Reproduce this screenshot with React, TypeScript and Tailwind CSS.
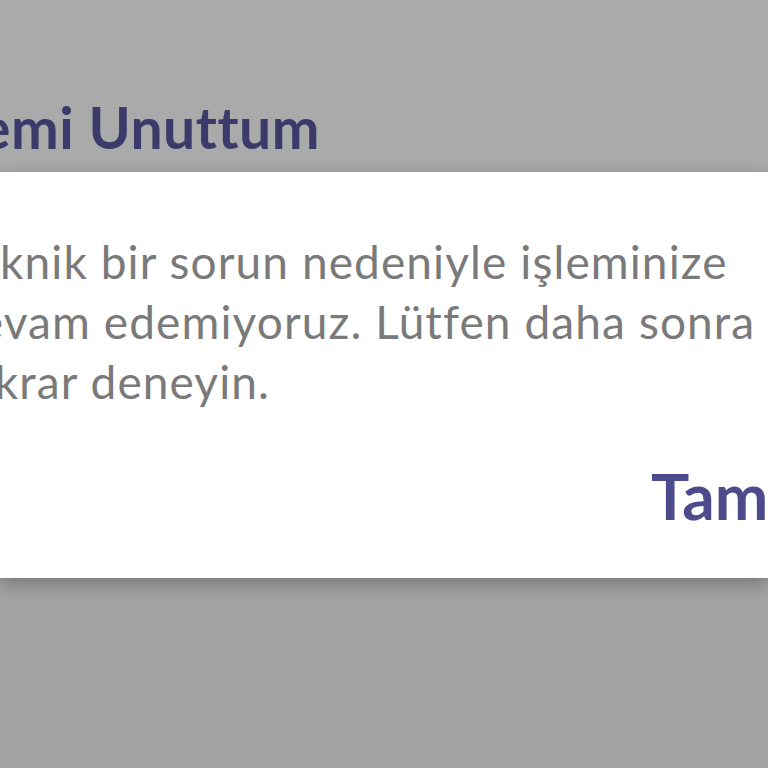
export default function App() {
  return (
    <div
      className="w-[768px] h-[768px] overflow-hidden bg-[#a3a3a3] flex flex-col"
      style={{ fontFamily: 'Lato, "Open Sans", sans-serif' }}
    >
      <div className="h-[172px] shrink-0 bg-[#aaaaaa] flex items-end pb-[16px]">
        <div className="w-[320px] flex justify-end">
          <h1 className="whitespace-nowrap text-[57px] leading-none font-bold tracking-[0.5px] text-[#3c3a6b]">
            Şifremi Unuttum
          </h1>
        </div>
      </div>

      <div className="relative h-[406px] shrink-0 bg-white shadow-[0_6px_18px_rgba(0,0,0,0.28)] flex flex-col">
        <p className="ml-[-48px] mt-[60px] w-[840px] text-[46px] leading-[60px] tracking-[1.1px] text-[#7a7a7a]">
          Teknik bir sorun nedeniyle işleminize
          <br />
          devam edemiyoruz. Lütfen daha sonra
          <br />
          tekrar deneyin.
        </p>
        <div className="mt-[52px] pl-[651px] whitespace-nowrap">
          <button className="text-[64px] leading-none font-bold text-[#4d4b8c]">Tamam</button>
        </div>
      </div>

      <div className="flex-1" />
    </div>
  );
}
